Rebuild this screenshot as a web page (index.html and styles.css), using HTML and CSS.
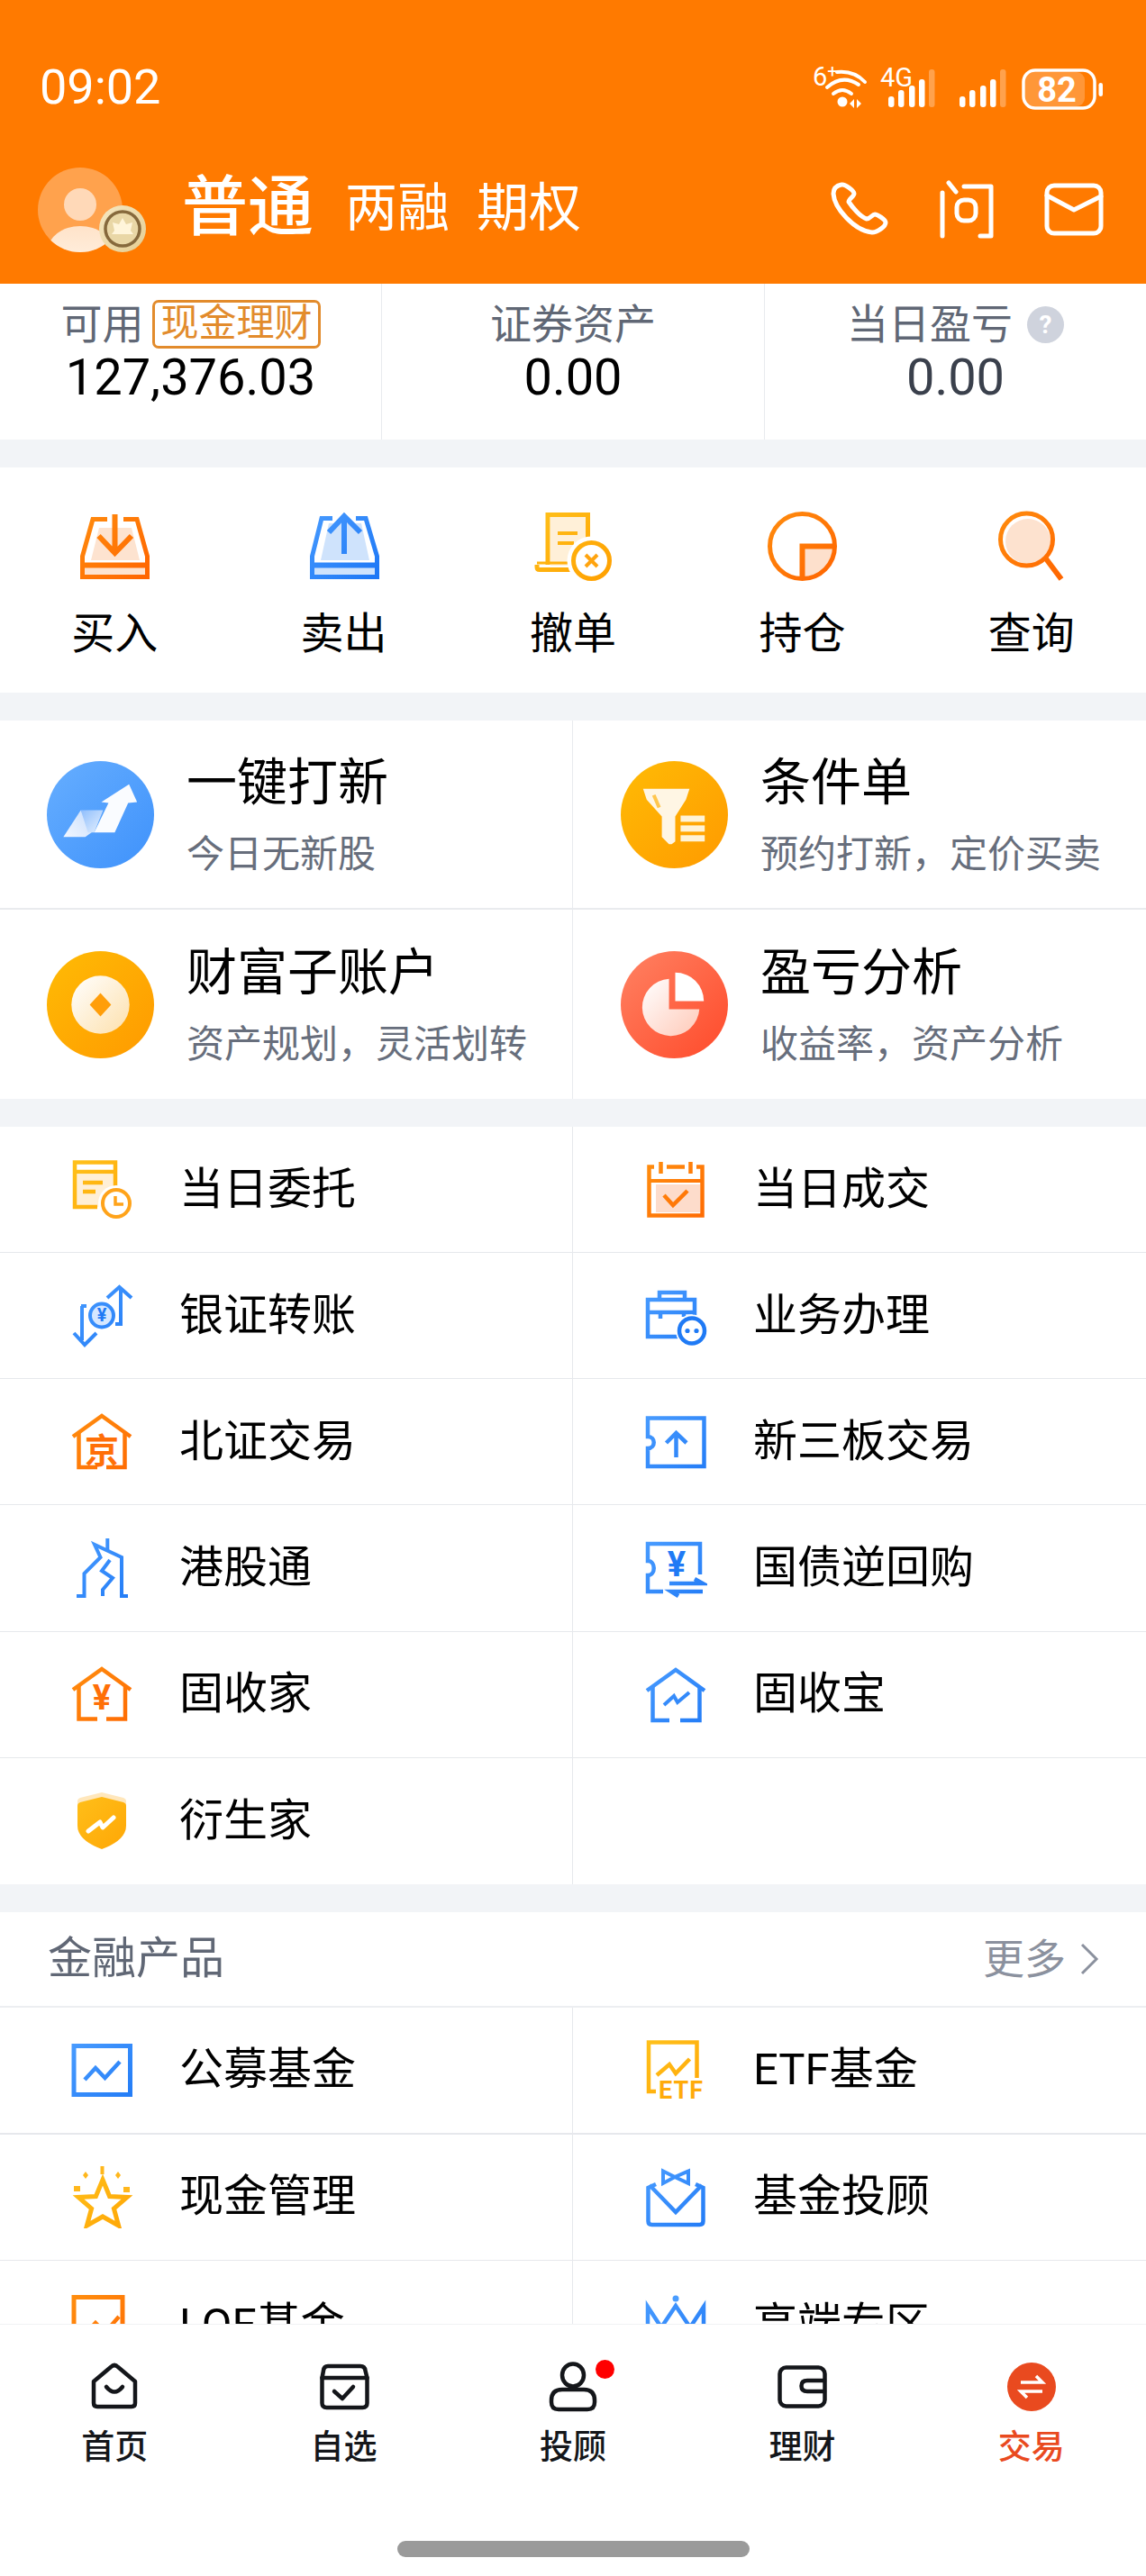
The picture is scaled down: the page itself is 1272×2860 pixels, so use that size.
FILE: index.html
```html
<!DOCTYPE html>
<html lang="zh-CN">
<head>
<meta charset="utf-8">
<title>交易</title>
<link rel="stylesheet" href="styles.css">
</head>
<body>
<!-- shared paint servers for the icon set -->
<svg class="defs" aria-hidden="true">
  <defs>
    <linearGradient id="gOrange" gradientUnits="userSpaceOnUse" x1="0" y1="0" x2="80" y2="80"><stop offset="0" stop-color="#ff8f0f"/><stop offset="1" stop-color="#ff6400"/></linearGradient>
    <linearGradient id="gBlue" gradientUnits="userSpaceOnUse" x1="0" y1="0" x2="80" y2="80"><stop offset="0" stop-color="#4a9dff"/><stop offset="1" stop-color="#1c76f5"/></linearGradient>
    <linearGradient id="gYellow" gradientUnits="userSpaceOnUse" x1="0" y1="0" x2="80" y2="80"><stop offset="0" stop-color="#ffc21c"/><stop offset="1" stop-color="#ffa000"/></linearGradient>
    <linearGradient id="bBlue" x1="0" y1="0" x2="1" y2="1"><stop offset="0" stop-color="#66aeff"/><stop offset="1" stop-color="#3f92fb"/></linearGradient>
    <linearGradient id="bYellow" x1="0" y1="0" x2="1" y2="1"><stop offset="0" stop-color="#ffbb05"/><stop offset="1" stop-color="#ff9a00"/></linearGradient>
    <linearGradient id="bRed" x1="0" y1="0" x2="1" y2="1"><stop offset="0" stop-color="#ff8263"/><stop offset="1" stop-color="#ff4a2a"/></linearGradient>
    <linearGradient id="wCream" x1="0" y1="0" x2="1" y2="1"><stop offset="0" stop-color="#fff"/><stop offset="1" stop-color="#fde0ac"/></linearGradient>
    <linearGradient id="wPink" x1="0" y1="0" x2="1" y2="1"><stop offset="0" stop-color="#fff"/><stop offset="1" stop-color="#ffc9b8"/></linearGradient>
    <linearGradient id="wBody" x1="0" y1="0" x2="0" y2="1"><stop offset="0" stop-color="#ffe3c9"/><stop offset="1" stop-color="#fff4e8"/></linearGradient>
    <linearGradient id="wFold" x1="0" y1="0" x2="1" y2="1"><stop offset="0" stop-color="#8fbefc"/><stop offset="1" stop-color="#e6f1ff"/></linearGradient>
    <linearGradient id="wStrip" x1="0" y1="1" x2="1" y2="0"><stop offset="0" stop-color="#f2f7ff"/><stop offset="1" stop-color="#c9defc"/></linearGradient>
    <linearGradient id="gCoin" x1="0" y1="0" x2="1" y2="1"><stop offset="0" stop-color="#f6e8c2"/><stop offset="1" stop-color="#e4cd92"/></linearGradient>
    <clipPath id="avatarClip"><circle cx="47" cy="47" r="47"/></clipPath>
  </defs>
</svg>

<main class="scroll">
  <header class="hero">
    <div class="status">
      <span class="clock">09:02</span>
      <svg class="status-icons" viewBox="0 -10 330 74" width="330" height="74">
        <text class="st-small" x="2" y="25">6<tspan class="st-plus" dy="-9">+</tspan></text>
        <circle cx="35" cy="43" r="5.5" fill="#fff"/>
        <g fill="none" stroke="#fff" stroke-width="4" stroke-linecap="round">
          <path d="M25 34Q35 26 45 34"/>
          <path d="M18 27Q35 12 53 24"/>
          <path d="M29 10Q48 8 60 21"/>
        </g>
        <path d="M43 45l5-5v10zM51 40l5 5-5 5z" fill="#fff"/>
        <text class="st-small" x="77" y="26">4G</text>
        <g fill="#fff">
          <rect x="86" y="37" width="6.5" height="12" rx="3"/>
          <rect x="97" y="30" width="6.5" height="19" rx="3"/>
          <rect x="109" y="25" width="6.5" height="24" rx="3"/>
          <rect x="120" y="18" width="6.5" height="31" rx="3"/>
          <rect x="131" y="7" width="6.5" height="42" rx="3" opacity=".3"/>
          <rect x="165" y="37" width="6.5" height="12" rx="3"/>
          <rect x="176" y="30" width="6.5" height="19" rx="3"/>
          <rect x="188" y="25" width="6.5" height="24" rx="3"/>
          <rect x="199" y="18" width="6.5" height="31" rx="3"/>
          <rect x="210" y="7" width="6.5" height="42" rx="3" opacity=".3"/>
        </g>
        <rect x="238" y="10" width="66" height="38" rx="9" fill="#fff" opacity=".22"/>
        <rect x="236" y="8" width="79" height="42" rx="13" fill="none" stroke="#fff" stroke-width="3.5"/>
        <text class="st-batt" x="273" y="43" text-anchor="middle">82</text>
        <rect x="319.5" y="22" width="4.5" height="15" rx="2.2" fill="#fff"/>
      </svg>
    </div>
    <div class="account">
      <div class="avatar">
        <svg viewBox="0 0 94 94" width="94" height="94">
          <circle cx="47" cy="47" r="47" fill="#ffa24d"/>
          <g clip-path="url(#avatarClip)">
            <circle cx="47" cy="41" r="18" fill="#ffd9b8"/>
            <ellipse cx="47" cy="92" rx="36" ry="27" fill="url(#wBody)"/>
          </g>
        </svg>
        <svg class="avatar-badge" viewBox="0 0 52 52" width="52" height="52">
          <circle cx="26" cy="26" r="26" fill="url(#gCoin)"/>
          <circle cx="26" cy="26" r="19" fill="#e9d7a6" stroke="#86693c" stroke-width="3.5"/>
          <path d="M26 14l4 7 7-2-2 9 3 4H14l3-4-2-9 7 2z" fill="#fff5da"/>
        </svg>
      </div>
      <span class="acct-main">普通</span>
      <span class="acct-sub acct-sub-first">两融</span>
      <span class="acct-sub">期权</span>
      <div class="hero-actions">
        <svg viewBox="0 0 66 70" width="66" height="70" class="hero-icon">
          <path d="M13 8C8 9 4 12 4 18C5 34 27 59 47 61C52 61 62 55 62 50C62 47 53 41 50 41C47 41 45 46 41 46C34 44 25 33 21 27C21 24 27 21 27 18C27 15 17 7 13 8Z"/>
        </svg>
        <svg viewBox="0 0 66 70" width="66" height="70" class="hero-icon">
          <path d="M13 6L21 16M6 17V65M30 10H60V65H48"/>
          <rect x="22" y="25" width="21" height="23" rx="8"/>
        </svg>
        <svg viewBox="0 0 66 70" width="66" height="70" class="hero-icon">
          <rect x="3" y="9" width="60" height="53" rx="8"/>
          <path d="M3 20L33 36L63 21"/>
        </svg>
      </div>
    </div>
  </header>

  <section class="stats">
    <div class="stat">
      <div class="stat-label stat-label-tight"><span>可用</span><span class="tag">现金理财</span></div>
      <div class="stat-value">127,376.03</div>
    </div>
    <div class="stat">
      <div class="stat-label"><span>证券资产</span></div>
      <div class="stat-value">0.00</div>
    </div>
    <div class="stat">
      <div class="stat-label"><span>当日盈亏</span><span class="hint">?</span></div>
      <div class="stat-value stat-value-muted">0.00</div>
    </div>
  </section>

  <section class="quick">
    <div class="quick-item">
      <svg viewBox="0 0 90 80" width="90" height="80">
        <path d="M28 19H64L73 55H19Z" fill="#fde3d0"/>
        <rect x="12" y="63" width="67" height="8" fill="#fde3d0"/>
        <g fill="none" stroke="url(#gOrange)" stroke-width="5">
          <path d="M37 9.5H21L9.5 50.5V73.5H81.5V50.5L70 9.5H55"/>
          <path d="M9.5 60.5H81.5" stroke-width="6"/>
          <path d="M45.5 4V46M27.5 28L45.5 47L64 28" stroke-width="6"/>
        </g>
      </svg>
      <span class="quick-label">买入</span>
    </div>
    <div class="quick-item">
      <svg viewBox="0 0 90 80" width="90" height="80">
        <path d="M28 14H64L73 55H19Z" fill="#cfe3fc"/>
        <rect x="12" y="63" width="67" height="8" fill="#cfe3fc"/>
        <g fill="none" stroke="url(#gBlue)" stroke-width="5">
          <path d="M32 8.5H20L9.5 50.5V73.5H81.5V50.5L69 8.5H58"/>
          <path d="M9.5 60.5H81.5" stroke-width="6"/>
          <path d="M45 7V48M28 24L45 6L63 24" stroke-width="6"/>
        </g>
      </svg>
      <span class="quick-label">卖出</span>
    </div>
    <div class="quick-item">
      <svg viewBox="0 0 90 80" width="90" height="80">
        <rect x="20" y="7" width="39" height="54" fill="#fff0d8"/>
        <g fill="none" stroke="url(#gYellow)">
          <path d="M17 60V4.5H61.5V40" stroke-width="5"/>
          <path d="M5 60V62.5Q5 65.5 8 65.5H42" stroke-width="5"/>
          <path d="M5 58H40" stroke-width="3"/>
          <path d="M28 25H50M28 36H46" stroke-width="4"/>
        </g>
        <circle cx="65.5" cy="55.5" r="27" fill="#fff"/>
        <circle cx="65.5" cy="55.5" r="20" fill="#fff" stroke="url(#gYellow)" stroke-width="5"/>
        <path d="M59 49L72 62M72 49L59 62" stroke="#ffa40f" stroke-width="4" fill="none"/>
      </svg>
      <span class="quick-label">撤单</span>
    </div>
    <div class="quick-item">
      <svg viewBox="0 0 90 80" width="90" height="80">
        <path d="M45.5 39.5V75A35.5 35.5 0 0 0 81 39.5Z" fill="#fde0cc"/>
        <g fill="none" stroke="url(#gOrange)" stroke-width="5">
          <circle cx="45.5" cy="39.5" r="36"/>
          <path d="M45.5 75V39.5H81" stroke-width="6"/>
        </g>
      </svg>
      <span class="quick-label">持仓</span>
    </div>
    <div class="quick-item">
      <svg viewBox="0 0 90 80" width="90" height="80">
        <circle cx="41" cy="34" r="25" fill="#fde2cf"/>
        <g fill="none" stroke="url(#gOrange)">
          <circle cx="39.5" cy="32" r="29" stroke-width="5"/>
          <path d="M60 52L78 76" stroke-width="6"/>
        </g>
      </svg>
      <span class="quick-label">查询</span>
    </div>
  </section>

  <section class="cards">
    <div class="card">
      <svg viewBox="0 0 120 120" width="119" height="119">
        <circle cx="60" cy="60" r="60" fill="url(#bBlue)"/>
        <path d="M18.5 85L38 55L50 80L43 85Z" fill="url(#wStrip)"/>
        <path d="M38 55H63L53 80H46Z" fill="url(#wFold)"/>
        <path d="M92 26L101 46L91 47L76 80H53L69 47L61 46Z" fill="#fafcff"/>
      </svg>
      <div class="card-text"><div class="card-title">一键打新</div><div class="card-sub">今日无新股</div></div>
    </div>
    <div class="card">
      <svg viewBox="0 0 120 120" width="119" height="119">
        <circle cx="60" cy="60" r="60" fill="url(#bYellow)"/>
        <path d="M25 31H77L73 43L61 62V90L57 93H54L46 85V62L29 43Z" fill="#fff6e4"/>
        <path d="M37 38L43 52" stroke="#ffc64d" stroke-width="4"/>
        <rect x="67" y="61" width="27" height="7" fill="#fff3d6"/>
        <rect x="67" y="72" width="27" height="7" fill="#fff3d6"/>
        <rect x="67" y="83" width="27" height="7" fill="#fff3d6"/>
      </svg>
      <div class="card-text"><div class="card-title">条件单</div><div class="card-sub">预约打新，定价买卖</div></div>
    </div>
    <div class="card">
      <svg viewBox="0 0 120 120" width="119" height="119">
        <circle cx="60" cy="60" r="60" fill="url(#bYellow)"/>
        <circle cx="60" cy="60" r="32.5" fill="url(#wCream)"/>
        <path d="M60 47L72 60L60 73L48 60Z" fill="#ff9e0a"/>
      </svg>
      <div class="card-text"><div class="card-title">财富子账户</div><div class="card-sub">资产规划，灵活划转</div></div>
    </div>
    <div class="card">
      <svg viewBox="0 0 120 120" width="119" height="119">
        <circle cx="60" cy="60" r="60" fill="url(#bRed)"/>
        <path d="M54 31V65H88A32 32 0 1 1 54 31Z" fill="url(#wPink)"/>
        <path d="M61 24A32 32 0 0 1 93 56H61Z" fill="#fff"/>
      </svg>
      <div class="card-text"><div class="card-title">盈亏分析</div><div class="card-sub">收益率，资产分析</div></div>
    </div>
  </section>

  <section class="menu">
    <div class="cell">
      <svg viewBox="0 0 70 70" width="70" height="70">
        <rect x="6" y="18" width="44" height="36" fill="#ffefd6"/>
        <g fill="none" stroke="url(#gYellow)" stroke-width="4.5">
          <path d="M50 34V4.5H5V54H30"/>
          <path d="M5 15H50"/>
          <path d="M14 27H36M14 37H28"/>
        </g>
        <circle cx="51" cy="50" r="20" fill="#fff"/>
        <circle cx="51" cy="50" r="15" fill="#fff" stroke="#ffa31a" stroke-width="4"/>
        <path d="M50 42V51H59" fill="none" stroke="#ffa31a" stroke-width="3.5"/>
      </svg>
      <span class="cell-label">当日委托</span>
    </div>
    <div class="cell">
      <svg viewBox="0 0 70 70" width="70" height="70">
        <rect x="13" y="29" width="49" height="31" fill="#fddccb"/>
        <g fill="none" stroke="url(#gOrange)" stroke-width="4.5">
          <path d="M11 9.5H5.5V63.5H64.5V9.5H58"/>
          <path d="M25 9.5H45M18.5 4V17M51.5 4V17"/>
          <path d="M5.5 25H64.5" stroke-width="4"/>
          <path d="M22 41L32 52L48 36"/>
        </g>
      </svg>
      <span class="cell-label">当日成交</span>
    </div>
    <div class="cell">
      <svg viewBox="0 0 70 70" width="70" height="70">
        <circle cx="35" cy="34.5" r="13" fill="#d6e7ff" stroke="url(#gBlue)" stroke-width="4"/>
        <text class="ic-yen-sm" x="35" y="41" text-anchor="middle">¥</text>
        <g fill="none" stroke="url(#gBlue)" stroke-width="4">
          <path d="M41 15L54.5 3L68 15"/>
          <path d="M56 5V44H50"/>
          <path d="M4 54L16 67L29 54"/>
          <path d="M12 24H18M13 24V62"/>
        </g>
      </svg>
      <span class="cell-label">银证转账</span>
    </div>
    <div class="cell">
      <svg viewBox="0 0 70 70" width="70" height="70">
        <g fill="none" stroke="url(#gBlue)" stroke-width="4.5">
          <path d="M38 58H4V17H56V35"/>
          <path d="M17 17V9H45V17"/>
          <path d="M4 31H56"/>
          <path d="M18 31V38M44 31V36"/>
        </g>
        <circle cx="53" cy="51.5" r="18" fill="#fff"/>
        <circle cx="53" cy="51.5" r="14" fill="#fff" stroke="#1f7af5" stroke-width="4.5"/>
        <circle cx="48" cy="51.5" r="2.6" fill="#1f7af5"/>
        <circle cx="58" cy="51.5" r="2.6" fill="#1f7af5"/>
      </svg>
      <span class="cell-label">业务办理</span>
    </div>
    <div class="cell">
      <svg viewBox="0 0 70 70" width="70" height="70">
        <g fill="none" stroke="url(#gOrange)" stroke-width="4.5">
          <path d="M3 29L35 6L67 29"/>
          <path d="M9.5 25V63H30M60.5 25V63H40"/>
        </g>
        <text class="ic-jing" x="35" y="58" text-anchor="middle">京</text>
      </svg>
      <span class="cell-label">北证交易</span>
    </div>
    <div class="cell">
      <svg viewBox="0 0 70 70" width="70" height="70">
        <g fill="none" stroke="url(#gBlue)" stroke-width="4.5">
          <path d="M4 8.5H66.5V62H4V42C13 42 13 29 4 29Z"/>
          <path d="M35.5 52V26M24.5 36L35.5 25L47 36"/>
        </g>
      </svg>
      <span class="cell-label">新三板交易</span>
    </div>
    <div class="cell">
      <svg viewBox="0 0 70 70" width="70" height="70">
        <g fill="none" stroke="url(#gBlue)" stroke-width="4">
          <path d="M7 66H15.5V41L33.5 23L27 9L57 23V66H64"/>
          <path d="M41.3 2V16"/>
          <path d="M44 26L35 38L47 46L36 59V66"/>
        </g>
      </svg>
      <span class="cell-label">港股通</span>
    </div>
    <div class="cell">
      <svg viewBox="0 0 70 70" width="70" height="70">
        <g fill="none" stroke="url(#gBlue)" stroke-width="4.5">
          <path d="M21 61H4V43C13 43 13 27 4 27V8H62V42"/>
          <path d="M28 52H65L56 47M65 61H30L38 66"/>
        </g>
        <text class="ic-yen" x="36" y="44" text-anchor="middle">¥</text>
      </svg>
      <span class="cell-label">国债逆回购</span>
    </div>
    <div class="cell">
      <svg viewBox="0 0 70 70" width="70" height="70">
        <g fill="none" stroke="url(#gOrange)" stroke-width="4.5">
          <path d="M3 30L35 7L67 30"/>
          <path d="M9.5 26V62.5H30M61 26V62.5H40"/>
        </g>
        <text class="ic-yen ic-yen-warm" x="35" y="52" text-anchor="middle">¥</text>
      </svg>
      <span class="cell-label">固收家</span>
    </div>
    <div class="cell">
      <svg viewBox="0 0 70 70" width="70" height="70">
        <g fill="none" stroke="url(#gBlue)" stroke-width="4.5">
          <path d="M3 31L35 8L67 31"/>
          <path d="M9.5 27V64H28M61.5 27V64H40"/>
          <path d="M22 47L33 37L37 44L50 33" stroke-width="4"/>
        </g>
      </svg>
      <span class="cell-label">固收宝</span>
    </div>
    <div class="cell">
      <svg viewBox="0 0 70 70" width="70" height="70">
        <path d="M35 3L59 9Q62 10 62 13V20H8V13Q8 10 11 9Z" fill="#ffe7bc"/>
        <path d="M35 8L59 14Q62 15 62 18V40Q62 56 35 66Q8 56 8 40V18Q8 15 11 14Z" fill="url(#gYellow)"/>
        <path d="M20 46L33 36L36 42L48 31" fill="none" stroke="#fff" stroke-width="5" stroke-linecap="round" stroke-linejoin="round"/>
      </svg>
      <span class="cell-label">衍生家</span>
    </div>
    <div class="cell"></div>
  </section>

  <section class="products">
    <div class="section-head">
      <span class="section-title">金融产品</span>
      <span class="section-more">更多
        <svg viewBox="0 0 24 36" width="24" height="36"><path d="M4 2L20 18L4 34" fill="none" stroke="#8b919e" stroke-width="3"/></svg>
      </span>
    </div>
    <div class="menu menu-bare">
      <div class="cell cell-heavy">
        <svg viewBox="0 0 70 70" width="70" height="70">
          <g fill="none" stroke="url(#gBlue)" stroke-width="5">
            <rect x="4" y="8.5" width="62.5" height="54"/>
            <path d="M16 46L28 33L38.5 44L55 26" stroke-width="4.5"/>
          </g>
        </svg>
        <span class="cell-label">公募基金</span>
      </div>
      <div class="cell cell-heavy">
        <svg viewBox="0 -4 70 78" width="70" height="78">
          <g fill="none" stroke="url(#gYellow)" stroke-width="4.5">
            <path d="M13 59H5V4.5H58.5V44"/>
            <path d="M14 41L28 29L35 39L50.5 23"/>
          </g>
          <text class="ic-etf" x="16" y="67">ETF</text>
        </svg>
        <span class="cell-label">ETF基金</span>
      </div>
      <div class="cell">
        <svg viewBox="0 0 70 70" width="70" height="70">
          <path d="M36 16L43.6 34.5L63 35.5L48.4 48L53.6 67L36 57L18.4 67L23.6 48L9 35.5L28.4 34.5Z" fill="none" stroke="url(#gYellow)" stroke-width="5"/>
          <g fill="#ffb71c">
            <rect x="33.5" y="1" width="4" height="9"/>
            <path d="M14 11l3-4 3 4-3 4zM50 11l3-4 3 4-3 4z"/>
            <rect x="4" y="23" width="7" height="6"/>
            <rect x="59" y="24" width="7" height="6"/>
          </g>
        </svg>
        <span class="cell-label">现金管理</span>
      </div>
      <div class="cell">
        <svg viewBox="0 0 70 70" width="70" height="70">
          <g fill="none" stroke="url(#gBlue)" stroke-width="4.5">
            <path d="M13 21L4.5 25V62Q4.5 66 8.5 66H61.5Q65.5 66 65.5 62V25L57 21"/>
            <path d="M6 22L35 52L64 22"/>
            <path d="M34 13L21 6.5V20L34 13L49 6.5V20Z" stroke-width="4"/>
          </g>
        </svg>
        <span class="cell-label">基金投顾</span>
      </div>
      <div class="cell">
        <svg viewBox="0 0 70 70" width="70" height="70">
          <g fill="none" stroke="url(#gOrange)" stroke-width="5">
            <path d="M4 66V4.5H58V66"/>
            <path d="M16 46L28 33L38.5 44L54 26" stroke-width="4.5"/>
          </g>
        </svg>
        <span class="cell-label">LOF基金</span>
      </div>
      <div class="cell">
        <svg viewBox="0 0 70 70" width="70" height="70">
          <circle cx="35" cy="6" r="3.5" fill="#4a9dff"/>
          <path d="M4 15V60H66V15L51 38L35 14L19 38Z" fill="none" stroke="url(#gBlue)" stroke-width="4.5"/>
        </svg>
        <span class="cell-label">高端专区</span>
      </div>
    </div>
  </section>
</main>

<nav class="tabbar">
  <div class="tabs">
    <div class="tab">
      <svg viewBox="0 0 60 60" width="60" height="60" class="tab-icon">
        <path d="M26 8Q30 4 34 8L53 24V48Q53 52 49 52H11Q7 52 7 48V24Z"/>
        <path d="M21 30Q30 41 39 30"/>
      </svg>
      <span class="tab-label">首页</span>
    </div>
    <div class="tab">
      <svg viewBox="0 0 60 60" width="60" height="60" class="tab-icon">
        <path d="M12 7H48Q53 7 53.5 12L55.5 20V48Q55.5 53 50.5 53H10.5Q5.5 53 5.5 48V20L7 12Q7.5 7 12 7Z"/>
        <path d="M5.5 20H55.5"/>
        <path d="M19 35L28 43L40 30"/>
      </svg>
      <span class="tab-label">自选</span>
    </div>
    <div class="tab">
      <svg viewBox="0 0 60 60" width="60" height="60" class="tab-icon">
        <ellipse cx="30" cy="17" rx="12" ry="12.5"/>
        <path d="M6 45Q6 33 18 33H42Q54 33 54 45V47Q54 55 46 55H14Q6 55 6 47Z"/>
      </svg>
      <i class="tab-dot"></i>
      <span class="tab-label">投顾</span>
    </div>
    <div class="tab">
      <svg viewBox="0 0 60 60" width="60" height="60" class="tab-icon">
        <rect x="5.5" y="8.5" width="50" height="43" rx="7"/>
        <path d="M55 23H36Q29.5 23 29.5 29Q29.5 35 36 35H55"/>
      </svg>
      <span class="tab-label">理财</span>
    </div>
    <div class="tab tab-active">
      <svg viewBox="0 0 60 60" width="60" height="60">
        <circle cx="30" cy="30" r="27" fill="#e94a1f"/>
        <path d="M18 25H42L35 18M42 35H18L25 42" fill="none" stroke="#fff" stroke-width="3.5"/>
      </svg>
      <span class="tab-label">交易</span>
    </div>
  </div>
  <div class="home-pill"></div>
</nav>
</body>
</html>
```

FILE: styles.css
```css
* { box-sizing: border-box; }

html, body {
  margin: 0;
  padding: 0;
}

body {
  width: 1272px;
  height: 2860px;
  overflow: hidden;
  display: flex;
  flex-direction: column;
  background: #f2f4f7;
  color: #000;
  font-family: "Roboto", "Noto Sans CJK SC", sans-serif;
}

svg { display: block; flex: none; }

.defs { width: 0; height: 0; }

.scroll {
  height: 2580px;
  overflow: hidden;
  display: flex;
  flex-direction: column;
  gap: 31px;
}

/* orange account header */
.hero {
  flex: none;
  height: 315px;
  margin-bottom: -31px;
  background: #ff7a00;
  color: #fff;
  padding-top: 70px;
}

.status {
  height: 54px;
  padding: 0 42px 0 44px;
  display: flex;
  align-items: center;
  justify-content: space-between;
}

.clock { font-size: 54px; line-height: 54px; }

.st-small { font-size: 29px; fill: #fff; font-family: "Liberation Sans Narrow", "Roboto", sans-serif; }
.st-plus { font-size: 20px; }
.st-batt { font-size: 38px; font-weight: 700; fill: #fff; font-family: "Roboto", sans-serif; }

.account {
  height: 94px;
  margin-top: 62px;
  padding-left: 42px;
  padding-right: 47px;
  display: flex;
  align-items: center;
}

.avatar {
  position: relative;
  width: 94px;
  height: 94px;
  flex: none;
}

.avatar-badge {
  position: absolute;
  left: 68px;
  top: 42px;
}

.acct-main {
  margin-left: 66px;
  margin-bottom: 6px;
  font-size: 73px;
  line-height: 90px;
  font-weight: 500;
}

.acct-sub {
  margin-left: 30px;
  margin-bottom: 4px;
  font-size: 58px;
  line-height: 70px;
}

.acct-sub-first { margin-left: 35px; }

.hero-actions {
  margin-left: auto;
  display: flex;
  gap: 53px;
  margin-bottom: 2px;
}

.hero-icon {
  fill: none;
  stroke: #fff;
  stroke-width: 5;
  stroke-linecap: round;
  stroke-linejoin: round;
}

/* balance summary */
.stats {
  flex: none;
  height: 173px;
  background: #fff;
  display: grid;
  grid-template-columns: 424px 425px 1fr;
}

.stat {
  padding-top: 18px;
  border-right: 1px solid #e8eaee;
  text-align: center;
}

.stat:last-child { border-right: 0; }

.stat-label {
  height: 54px;
  display: flex;
  align-items: center;
  justify-content: center;
  gap: 16px;
  color: #606775;
  font-size: 46px;
  line-height: 54px;
}

.stat-label-tight { gap: 10px; }

.tag {
  height: 54px;
  padding: 0 6px;
  border: 3px solid #e28b2c;
  border-radius: 7px;
  color: #e28b2c;
  font-size: 42px;
  line-height: 46px;
}

.hint {
  width: 41px;
  height: 41px;
  border-radius: 50%;
  background: #cfd3dd;
  color: #fff;
  font-size: 28px;
  line-height: 41px;
  font-weight: 700;
}

.stat-value {
  margin-top: 2px;
  font-size: 56px;
  line-height: 60px;
}

.stat-value-muted { color: #3a404c; }

/* trade shortcuts */
.quick {
  flex: none;
  height: 250px;
  padding-top: 48px;
  background: #fff;
  display: grid;
  grid-template-columns: repeat(5, 1fr);
}

.quick-item {
  display: flex;
  flex-direction: column;
  align-items: center;
}

.quick-label {
  margin-top: 27px;
  font-size: 48px;
  line-height: 60px;
}

/* feature cards */
.cards {
  flex: none;
  height: 420px;
  background: #fff;
  display: grid;
  grid-template-columns: 636px 636px;
  grid-template-rows: 210px 210px;
}

.card {
  display: flex;
  align-items: center;
  gap: 36px;
  padding-left: 52px;
  border-bottom: 2px solid #e9ebee;
}

.card:nth-child(odd) { border-right: 1px solid #e8eaee; }
.card:nth-child(even) { padding-left: 53px; }
.card:nth-child(n+3) { border-bottom: 0; }

.card-text { margin-top: 4px; }

.card-title {
  font-size: 56px;
  line-height: 64px;
}

.card-sub {
  margin-top: 22px;
  color: #676e7c;
  font-size: 42px;
  line-height: 52px;
  white-space: nowrap;
}

/* two-column service menu */
.menu {
  flex: none;
  background: #fff;
  display: grid;
  grid-template-columns: 636px 636px;
  grid-auto-rows: 140.17px;
}

.menu-bare { grid-auto-rows: 140.7px; }

.cell {
  display: flex;
  align-items: center;
  gap: 51px;
  padding-left: 79px;
  border-bottom: 1px solid #e6e8ec;
}

.cell:nth-child(odd) {
  padding-left: 78px;
  border-right: 1px solid #e6e8ec;
}

.cell:nth-last-child(-n+2) { border-bottom: 0; }

.cell-heavy { border-bottom-width: 2px; }

.cell-label {
  font-size: 49px;
  line-height: 60px;
  white-space: nowrap;
}

.ic-jing { font-size: 38px; font-weight: 700; fill: #ff6f08; }
.ic-yen { font-size: 38px; font-weight: 700; fill: #1f7af5; }
.ic-yen-warm { fill: #ff6f08; }
.ic-yen-sm { font-size: 20px; font-weight: 700; fill: #1f7af5; }
.ic-etf { font-size: 27px; font-weight: 700; fill: #ffab0a; letter-spacing: 1px; }

/* product list */
.products {
  flex: none;
  background: #fff;
}

.section-head {
  height: 106px;
  padding: 0 51px 0 53px;
  display: flex;
  align-items: center;
  justify-content: space-between;
  border-bottom: 2px solid #eceef1;
}

.section-title {
  color: #606775;
  font-size: 49px;
  line-height: 60px;
}

.section-more {
  display: flex;
  align-items: center;
  gap: 14px;
  color: #8b919e;
  font-size: 46px;
  line-height: 60px;
}

/* bottom navigation */
.tabbar {
  flex: none;
  height: 280px;
  background: #fff;
  border-top: 1px solid #f1f2f4;
  padding-top: 39px;
}

.tabs {
  display: grid;
  grid-template-columns: repeat(5, 1fr);
}

.tab {
  position: relative;
  display: flex;
  flex-direction: column;
  align-items: center;
}

.tab-icon {
  fill: none;
  stroke: #14161a;
  stroke-width: 4.5;
  stroke-linejoin: round;
  stroke-linecap: round;
}

.tab-dot {
  position: absolute;
  left: 152px;
  top: 0;
  width: 21px;
  height: 21px;
  border-radius: 50%;
  background: #f00;
}

.tab-label {
  margin-top: 16px;
  color: #14161a;
  font-size: 37px;
  line-height: 44px;
  font-weight: 500;
}

.tab-active .tab-label { color: #e94a1f; }

.home-pill {
  width: 391px;
  height: 18px;
  margin: 81px auto 0;
  border-radius: 9px;
  background: #9a9a9a;
}
```
